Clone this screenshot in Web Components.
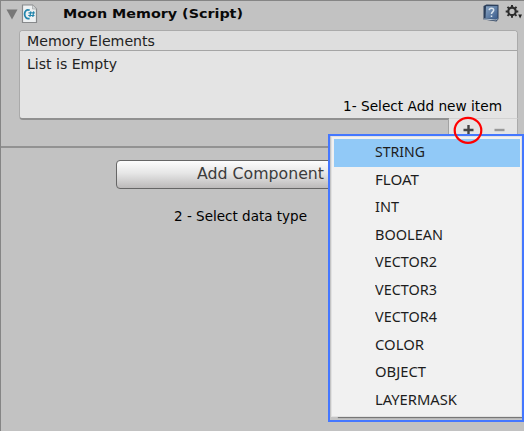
<!DOCTYPE html>
<html lang="en"><head><meta charset="utf-8"><title>Moon Memory</title>
<style>html,body{margin:0;width:524px;height:431px;overflow:hidden;background:#c2c2c2}</style></head>
<body><memory-inspector></memory-inspector>
<script>
const define=(name,html,ready)=>customElements.define(name,class extends HTMLElement{
  constructor(){super();const t=document.createElement('template');t.innerHTML=html;
    this.attachShadow({mode:'open'}).append(t.content.cloneNode(true));}
  connectedCallback(){if(ready)ready(this);}
});
// A single-line label whose glyphs are scaled to the width given in "fit".
define('ui-label',`<style>:host{display:block;white-space:nowrap;width:max-content}span{display:inline-block;transform-origin:0 50%}</style><span><slot></slot></span>`,el=>{
  const s=el.shadowRoot.querySelector('span'),fit=+el.getAttribute('fit');
  el.style.width=fit+'px';
  s.style.transform='scaleX('+fit/s.getBoundingClientRect().width+')';
});
define('component-header',`<style>
:host{display:flex;box-sizing:border-box;height:30px;padding:4px 1px 0 5px;align-items:flex-start;border-top:1px solid #858585;font:bold 13px/18px "DejaVu Sans",sans-serif;color:#090909}
svg{display:block;flex:none}.fold{margin-top:4px}.script{margin:-1px 0 0 3px}ui-label{margin:0 auto 0 25px}.book{margin-top:-1px}.gear{margin:-1px 0 0 5px}
</style>
<svg class="fold" width="12" height="11"><path d="M.5.5h11L6 10.5z" fill="#777"/></svg>
<svg class="script" width="17" height="20" viewBox="0 0 17 20"><path d="M1.5 1h10l4 4v13.5h-14z" fill="#eef1f2" stroke="#87898b" stroke-width="1.2"/><path d="M11.5 1v4h4" fill="#d4d7d8" stroke="#a0a3a5" stroke-width=".7"/><path d="M8.7 6.3C5.5 4.9 3.6 7.2 3.6 10s1.8 5.3 5 4.3" fill="none" stroke="#2386ad" stroke-width="1.8"/><path d="M9.8 7.3 8.9 13M12.7 7.3 11.8 13M7.5 8.9h6.3M7.2 11.5h6.3" stroke="#2386ad" stroke-width="1.2"/></svg>
<ui-label fit="180">Moon Memory (Script)</ui-label>
<svg class="book" width="18" height="19" viewBox="0 0 17 19"><defs><linearGradient id="b" x2="1" y2="1"><stop stop-color="#8ba6c4"/><stop offset="1" stop-color="#3a5c8c"/></linearGradient></defs><path d="m1 2 3-1.5 12 .3V15l-2 2.5L1 15.5z" fill="#2b3f5b"/><path d="M3.5 2.3 15 2v13L3 14.5z" fill="url(#b)"/><path d="m1.5 15 12.4 1 1.2-1.3" fill="none" stroke="#b7c7d7"/><path d="M6.7 6.1c.2-2.5 4.5-2.6 4.5 0 0 1.9-2.2 1.7-2.2 4M9 11.5v1.4" fill="none" stroke="#dbe5ee" stroke-width="1.5"/></svg>
<svg class="gear" width="18" height="16" viewBox="0 0 18 16"><circle cx="7" cy="7.4" r="3.7" fill="none" stroke="#2d2d2d" stroke-width="2.2"/><path d="M7 1v2.5M7 11.3v2.5M.7 7.4h2.5M10.8 7.4h2.5M2.5 2.9l1.8 1.8M9.7 10.1l1.8 1.8M11.5 2.9 9.7 4.7M4.3 10.1l-1.8 1.8" stroke="#2d2d2d" stroke-width="2"/><path d="M13.2 10.5H17l-1.9 4z" fill="#222"/></svg>`);
define('memory-list',`<style>
:host{display:block;margin:0 6px 0 18px;height:90px;box-sizing:border-box;background:#e4e4e4;border:1px solid #aaa;border-bottom:2px solid #909090;border-radius:4px 4px 2px 4px;font:14px/20px "DejaVu Sans",sans-serif;color:#222}
header{height:19px;background:#dedede;border-bottom:1px solid #a5a5a5;border-radius:3px 3px 0 0;padding-left:7px}
.body{padding:3px 0 0 7px}.note{color:#000;margin:22px 0 0 323px}
</style><header><ui-label fit="128">Memory Elements</ui-label></header><div class="body"><ui-label fit="90">List is Empty</ui-label></div><ui-label class="note" fit="159">1- Select Add new item</ui-label>`);
define('list-actions',`<style>:host{display:flex;position:relative;margin:-2px 6px 0 auto;width:69px;height:18px;box-sizing:border-box;background:#e4e4e4;border-top:1px solid #d2d2d2;border-right:1px solid #aaa;box-shadow:-1px 1px 0 #a2a2a2;padding:6px 12px 0 14px;justify-content:space-between}</style>
<svg width="11" height="12"><path d="M5.5 0v10M.5 5h10" stroke="#444" stroke-width="2.4"/></svg><svg width="11" height="12"><path d="M.5 5h10" stroke="#999" stroke-width="2.4"/></svg>`);
define('add-button',`<style>:host{display:block;box-sizing:border-box;width:260px;height:29px;margin:12px 0 0 115px;border:1px solid #666;border-radius:4px;background:linear-gradient(#fdfdfd,#e6e6e6 45%,#bcbaba);font:15.5px/26px "DejaVu Sans",sans-serif;color:#3c3c3c;padding-left:80px}</style><ui-label fit="127">Add Component</ui-label>`);
define('menu-item',`<style>:host{display:block;height:27.5px;box-sizing:border-box;padding-left:41px;font:15px/24px "Noto Sans","Open Sans",sans-serif;color:#1d1d1d}:host([selected]){background:#91c9f7}</style><ui-label></ui-label>`,el=>{
  const l=document.createElement('ui-label');l.setAttribute('fit',el.getAttribute('fit'));l.textContent=el.getAttribute('label');
  el.shadowRoot.querySelector('ui-label').replaceWith(l);
});
define('type-menu',`<style>:host{display:block;box-sizing:border-box;width:196px;height:288px;border:2px solid #4477ff;background:#c4c4c4;padding:0 0 3px 1px}
nav{height:281px;box-sizing:border-box;background:#f1f1f1;border:1px solid #e2e2e2;padding:2px 1px 0 2px;box-shadow:7px 1px 1px #777}</style><nav></nav>`,el=>{
  const nav=el.shadowRoot.querySelector('nav');
  [['STRING',50],['FLOAT',44],['INT',24],['BOOLEAN',68],['VECTOR2',62],['VECTOR3',62],['VECTOR4',62],['COLOR',49],['OBJECT',51],['LAYERMASK',82]].forEach(([n,w],i)=>{
    const m=document.createElement('menu-item');m.setAttribute('label',n);m.setAttribute('fit',w);if(!i)m.setAttribute('selected','');nav.append(m);
  });
});
define('memory-inspector',`<style>
:host{display:block;position:relative;width:524px;height:431px;box-sizing:border-box;overflow:hidden;background:#c2c2c2;border-left:1px solid #858585}
hr{border:0;height:2px;background:#929292;margin:10px 0 0}
.note{font:14px/20px "DejaVu Sans",sans-serif;color:#000;margin:17px 0 0 173px}
type-menu{position:absolute;left:327px;top:134px;overflow:hidden}.ring{position:absolute;left:452px;top:116px}
</style><component-header></component-header><memory-list></memory-list><list-actions></list-actions><hr><add-button></add-button><ui-label class="note" fit="133">2 - Select data type</ui-label><type-menu></type-menu><svg class="ring" width="31" height="29"><ellipse cx="15" cy="14.3" rx="13.3" ry="12.5" fill="none" stroke="#ff0000" stroke-width="2.2"/></svg>`);
</script></body></html>
